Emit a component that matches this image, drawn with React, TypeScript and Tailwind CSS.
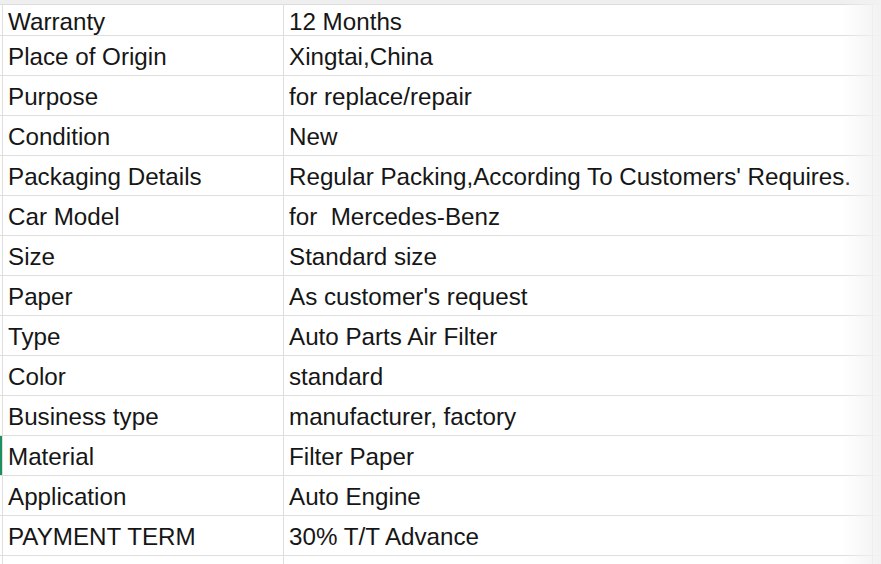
import React from "react";

const rows: [string, string][] = [
  ["Place of Origin", "Xingtai,China"],
  ["Purpose", "for replace/repair"],
  ["Condition", "New"],
  ["Packaging Details", "Regular Packing,According To Customers' Requires."],
  ["Car Model", "for  Mercedes-Benz"],
  ["Size", "Standard size"],
  ["Paper", "As customer's request"],
  ["Type", "Auto Parts Air Filter"],
  ["Color", "standard"],
  ["Business type", "manufacturer, factory"],
  ["Material", "Filter Paper"],
  ["Application", "Auto Engine"],
  ["PAYMENT TERM", "30% T/T Advance"],
];

function Row({ a, b, h, marked }: { a: string; b: string; h: string; marked?: boolean }) {
  return (
    <div className={`flex ${h} border-b border-[#dedede]`}>
      <div className={`w-[2px] shrink-0 ${marked ? "bg-[#1e8f5e]" : ""}`} />
      <div className="w-[282px] shrink-0 border-l border-r border-[#dedede] flex items-center pl-[5px] pt-[4px] whitespace-pre">
        {a}
      </div>
      <div className="w-[589px] shrink-0 border-r border-[#dedede] flex items-center pl-[5px] pt-[4px] whitespace-pre">
        {b}
      </div>
    </div>
  );
}

export default function App() {
  return (
    <div
      className="w-[881px] h-[564px] overflow-hidden bg-white text-[#161616] text-[24.2px] leading-none relative"
      style={{ fontFamily: '"Liberation Sans", Arial, sans-serif' }}
    >
      <div className="h-[4px] bg-[#efefef] border-b border-[#dcdcdc] box-content" />
      <Row a="Warranty" b="12 Months" h="h-[31px]" />
      {rows.map(([a, b]) => (
        <Row key={a} a={a} b={b} h="h-[40px]" marked={a === "Material"} />
      ))}
      <Row a="" b="" h="h-[40px]" />
      <div className="absolute top-0 right-0 w-[40px] h-full bg-gradient-to-r from-transparent to-[#f2f2f2] pointer-events-none" />
    </div>
  );
}
